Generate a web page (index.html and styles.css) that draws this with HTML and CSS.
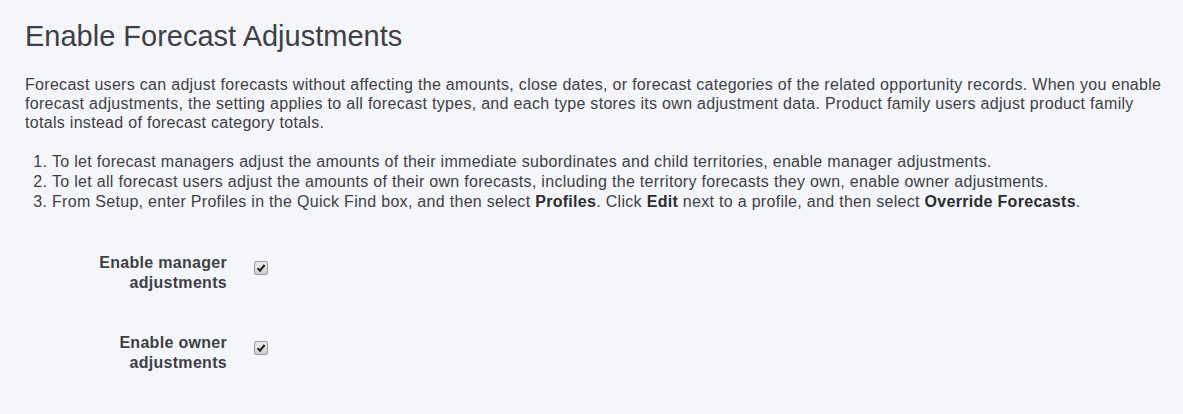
FILE: index.html
```html
<!DOCTYPE html>
<html lang="en">

<head>
    <meta charset="UTF-8">
    <title>Enable Forecast Adjustments</title>
    <link rel="stylesheet" href="styles.css">
</head>

<body>
<div class="page">
    <h1>Enable Forecast Adjustments</h1>
    <p class="intro">Forecast users can adjust forecasts without affecting the amounts, close dates, or forecast categories of the related opportunity records. When you enable forecast adjustments, the setting applies to all forecast types, and each type stores its own adjustment data. Product family users adjust product family totals instead of forecast category totals.</p>
    <ol class="steps">
        <li>To let forecast managers adjust the amounts of their immediate subordinates and child territories, enable manager adjustments.</li>
        <li>To let all forecast users adjust the amounts of their own forecasts, including the territory forecasts they own, enable owner adjustments.</li>
        <li>From Setup, enter Profiles in the Quick Find box, and then select <b>Profiles</b>. Click <b>Edit</b> next to a profile, and then select <b>Override Forecasts</b>.</li>
    </ol>
    <div class="settings">
        <div class="setting-row">
            <label class="setting-label" for="manager_adj">Enable manager adjustments</label>
            <span class="check" id="manager_adj"><svg viewBox="0 0 10 10" width="10" height="10"><path d="M1.6 5.3 L4 7.7 L8.6 2" fill="none" stroke="#262626" stroke-width="2.2"/></svg></span>
        </div>
        <div class="setting-row">
            <label class="setting-label" for="owner_adj">Enable owner adjustments</label>
            <span class="check" id="owner_adj"><svg viewBox="0 0 10 10" width="10" height="10"><path d="M1.6 5.3 L4 7.7 L8.6 2" fill="none" stroke="#262626" stroke-width="2.2"/></svg></span>
        </div>
    </div>
</div>
</body>

</html>
```

FILE: styles.css
```css
* {
    padding: 0;
    margin: 0;
    box-sizing: border-box;
}

body {
    background-color: #f5f6fa;
    color: #3e4045;
    font-family: "Liberation Sans", Arial, sans-serif;
    font-size: 16px;
    letter-spacing: 0.3px;
}

.page {
    padding: 19px 10px 0 25px;
}

h1 {
    font-size: 29px;
    font-weight: normal;
    line-height: 34px;
    letter-spacing: 0;
    color: #3e4045;
}

.intro {
    margin-top: 22px;
    line-height: 19px;
}

.steps {
    margin-top: 20px;
    padding-left: 27px;
    line-height: 20px;
}

.steps b {
    color: #2b2d31;
}

.settings {
    margin-top: 41px;
}

.setting-row {
    display: flex;
    align-items: flex-start;
    gap: 27px;
    margin-bottom: 40px;
}

.setting-label {
    width: 202px;
    text-align: right;
    font-weight: bold;
    line-height: 20px;
}

.check {
    width: 14px;
    height: 14px;
    margin-top: 8px;
    border: 1px solid #9a9a9a;
    border-radius: 2px;
    background: linear-gradient(#ececec, #cfcfcf);
    display: flex;
    align-items: center;
    justify-content: center;
}
```
